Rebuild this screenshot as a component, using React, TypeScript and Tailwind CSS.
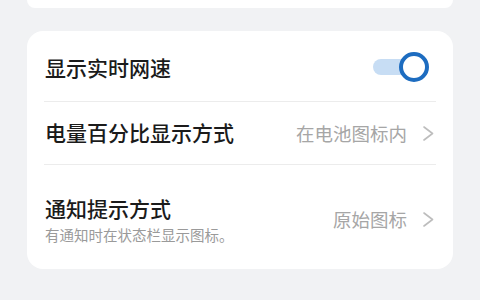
const font = { fontFamily: '"Noto Sans CJK SC", "Noto Sans", sans-serif' };

function Toggle() {
  return (
    <div className="relative h-[30px] w-[56px]">
      <div className="absolute left-0 top-[7px] h-[16px] w-[44px] rounded-full bg-[#c7ddf4]" />
      <div className="absolute right-0 top-0 h-[30px] w-[30px] rounded-full border-[4px] border-[#1d6cc0] bg-white" />
    </div>
  );
}

function Chevron() {
  return (
    <svg width="11" height="15" viewBox="0 0 11 15" fill="none">
      <polyline points="1,1 9.5,7.5 1,14" stroke="#bdbdbd" strokeWidth="1.6" strokeLinecap="round" strokeLinejoin="round" />
    </svg>
  );
}

function Value({ text }: { text: string }) {
  return (
    <div className="flex items-center gap-[16px]">
      <span className="text-[18.5px] leading-none text-[#a6a6a6]">{text}</span>
      <Chevron />
    </div>
  );
}

export default function App() {
  return (
    <div className="h-[300px] w-[480px] overflow-hidden bg-[#f1f2f4]" style={font}>
      <div className="px-[27px]">
        {/* 上一张卡片的底部 */}
        <div className="h-[8px] rounded-b-[16px] bg-white" />

        <div className="mt-[23px] rounded-[16px] bg-white pt-[4px] pb-[24px]">
          {/* 显示实时网速 */}
          <div className="flex h-[66px] items-center justify-between px-[18px]">
            <span className="text-[21px] font-medium text-[#1b1b1b]">显示实时网速</span>
            <div className="mr-[6px] mb-[2px]">
              <Toggle />
            </div>
          </div>
          <div className="mx-[17px] h-px bg-[#ececec]" />

          {/* 电量百分比显示方式 */}
          <div className="flex h-[62px] items-center justify-between pl-[18px] pr-[19px]">
            <span className="text-[21px] font-medium text-[#1b1b1b]">电量百分比显示方式</span>
            <Value text="在电池图标内" />
          </div>
          <div className="mx-[17px] h-px bg-[#ececec]" />

          {/* 通知提示方式 */}
          <div className="flex items-center justify-between pt-[29px] pl-[18px] pr-[19px]">
            <div className="flex flex-col">
              <span className="text-[21px] font-medium leading-[28px] text-[#1b1b1b]">通知提示方式</span>
              <span className="mt-[3px] text-[14.5px] leading-[20px] text-[#9a9a9a]">
                有通知时在状态栏显示图标。
              </span>
            </div>
            <Value text="原始图标" />
          </div>
        </div>

        <div className="mt-[27px] pl-[6px] text-[14px] text-[#8a8a8a]">通知</div>
      </div>
    </div>
  );
}
